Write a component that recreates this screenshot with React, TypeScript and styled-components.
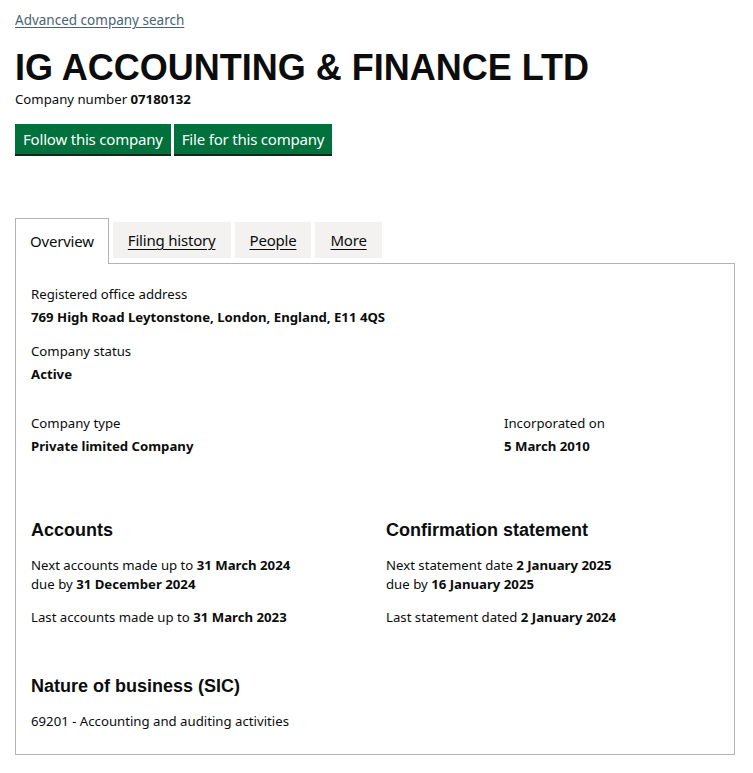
import React from "react";
import styled, { createGlobalStyle } from "styled-components";

const Global = createGlobalStyle`
  html, body { margin: 0; padding: 0; background: #ffffff; }
  body { font-family: "Noto Sans", "Liberation Sans", Arial, sans-serif; color: #0b0c0c; }
`;

const Page = styled.div`
  padding: 10px 18px 18px 15px;
  display: flex;
  flex-direction: column;
`;

const BackLink = styled.a`
  font-size: 13.5px;
  line-height: 20px;
  color: #4c6272;
  text-decoration: underline;
  text-underline-offset: 2px;
  align-self: flex-start;
`;

const Title = styled.h1`
  margin: 18px 0 0;
  font-family: "Liberation Sans", Arial, sans-serif;
  font-weight: 700;
  font-size: 36px;
  line-height: 40px;
  color: #0b0c0c;
`;

const CompanyNumber = styled.p`
  margin: 1px 0 0;
  font-size: 13.2px;
  line-height: 20px;
  strong { font-weight: 700; }
`;

const ButtonRow = styled.div`
  display: flex;
  gap: 3px;
  margin-top: 15px;
`;

const GreenButton = styled.button`
  background: #00703c;
  color: #ffffff;
  border: none;
  box-shadow: 0 2px 0 #002d18;
  font-family: "Noto Sans", "Liberation Sans", Arial, sans-serif;
  font-size: 15px;
  line-height: 20px;
  padding: 5px 8px;
  cursor: pointer;
  letter-spacing: -0.2px;
`;

const Tabs = styled.div`
  margin-top: 64px;
  display: flex;
  align-items: flex-start;
  gap: 4px;
  position: relative;
  z-index: 1;
  margin-bottom: -1px;
`;

const Tab = styled.a<{ $active?: boolean }>`
  font-size: 15px;
  letter-spacing: -0.2px;
  color: #0b0c0c;
  text-decoration: ${(p) => (p.$active ? "none" : "underline")};
  text-underline-offset: 3px;
  background: ${(p) => (p.$active ? "#ffffff" : "#f3f2f1")};
  border: ${(p) => (p.$active ? "1px solid #b1b4b6" : "none")};
  border-bottom: none;
  padding: ${(p) => (p.$active ? "12px 14px 13px 14px" : "8px 15px 8px 15px")};
  line-height: 20px;
  margin-top: ${(p) => (p.$active ? "0" : "4px")};
`;

const Panel = styled.div`
  border: 1px solid #b1b4b6;
  padding: 20px 15px 23px 15px;
  display: flex;
  flex-direction: column;
`;

const Field = styled.div<{ $gapTop?: number }>`
  margin-top: ${(p) => p.$gapTop ?? 0}px;
`;

const Label = styled.div`
  font-size: 13.2px;
  line-height: 20px;
  color: #0b0c0c;
`;

const Value = styled.div`
  font-size: 13.2px;
  line-height: 20px;
  font-weight: 700;
  margin-top: 3px;
`;

const Row = styled.div<{ $cols: string; $gapTop: number }>`
  display: grid;
  grid-template-columns: ${(p) => p.$cols};
  margin-top: ${(p) => p.$gapTop}px;
`;

const SectionTitle = styled.h2`
  margin: 0;
  font-family: "Liberation Sans", Arial, sans-serif;
  font-weight: 700;
  font-size: 18px;
  line-height: 24px;
`;

const Text = styled.p<{ $gapTop?: number }>`
  margin: ${(p) => p.$gapTop ?? 14}px 0 0;
  font-size: 13.2px;
  line-height: 19px;
  strong { font-weight: 700; }
`;

export default function App() {
  return (
    <>
      <Global />
      <Page>
        <BackLink href="#">Advanced company search</BackLink>
        <Title>IG ACCOUNTING &amp; FINANCE LTD</Title>
        <CompanyNumber>
          Company number <strong>07180132</strong>
        </CompanyNumber>
        <ButtonRow>
          <GreenButton>Follow this company</GreenButton>
          <GreenButton>File for this company</GreenButton>
        </ButtonRow>

        <Tabs>
          <Tab $active>Overview</Tab>
          <Tab href="#">Filing history</Tab>
          <Tab href="#">People</Tab>
          <Tab href="#">More</Tab>
        </Tabs>
        <Panel>
          <Field>
            <Label>Registered office address</Label>
            <Value>769 High Road Leytonstone, London, England, E11 4QS</Value>
          </Field>
          <Field $gapTop={14}>
            <Label>Company status</Label>
            <Value>Active</Value>
          </Field>
          <Row $cols="473px 1fr" $gapTop={29}>
            <Field>
              <Label>Company type</Label>
              <Value>Private limited Company</Value>
            </Field>
            <Field>
              <Label>Incorporated on</Label>
              <Value>5 March 2010</Value>
            </Field>
          </Row>
          <Row $cols="355px 1fr" $gapTop={62}>
            <div>
              <SectionTitle>Accounts</SectionTitle>
              <Text>
                Next accounts made up to <strong>31 March 2024</strong>
                <br />
                due by <strong>31 December 2024</strong>
              </Text>
              <Text>
                Last accounts made up to <strong>31 March 2023</strong>
              </Text>
            </div>
            <div>
              <SectionTitle>Confirmation statement</SectionTitle>
              <Text>
                Next statement date <strong>2 January 2025</strong>
                <br />
                due by <strong>16 January 2025</strong>
              </Text>
              <Text>
                Last statement dated <strong>2 January 2024</strong>
              </Text>
            </div>
          </Row>
          <Field $gapTop={47}>
            <SectionTitle>Nature of business (SIC)</SectionTitle>
            <Text>69201 - Accounting and auditing activities</Text>
          </Field>
        </Panel>
      </Page>
    </>
  );
}
